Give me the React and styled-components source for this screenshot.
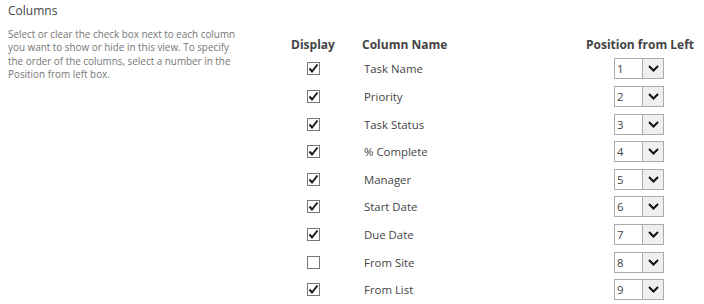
import React from 'react'
import styled, { createGlobalStyle } from 'styled-components';

const Global = createGlobalStyle`
body{
  margin:0;
  background:#fff;
  font-family:"Open Sans","Noto Sans",sans-serif;
}
`;

const Page = styled.section`
display:flex;
width:704px;
height:304px;
padding:0 0 0 8px;
box-sizing:border-box;
`;

const Intro = styled.div`
width:272px;
flex-shrink:0;
`;

const Heading = styled.h2`
margin:0;
padding-top:3px;
font-size:12px;
font-weight:400;
color:#444;
line-height:16px;
`;

const Help = styled.p`
margin:9px 0 0 0;
font-size:9.9px;
line-height:13.4px;
color:#777;
white-space:nowrap;
`;

const Table = styled.div`
display:grid;
grid-template-columns:66px 234px 120px;
grid-template-rows:22px;
grid-auto-rows:27.625px;
padding-top:33px;
`;

const Head = styled.div`
font-weight:700;
font-size:12px;
color:#444;
display:flex;
align-items:center;
justify-content:${p => p.$align || 'flex-start'};
padding-left:${p => p.$pad || 0}px;
`;

const Cell = styled.div`
display:flex;
align-items:center;
justify-content:${p => p.$align || 'flex-start'};
padding-left:${p => p.$pad || 0}px;
font-size:11.4px;
color:#444;
`;

const Box = styled.span`
width:11px;
height:11px;
border:1px solid #777;
background:#fff;
display:flex;
align-items:center;
justify-content:center;
`;

const Select = styled.div`
width:48px;
height:19px;
border:1px solid #ababab;
display:flex;
background:#fff;
margin-left:-2px;
`;

const Value = styled.span`
flex:1;
font-size:11.4px;
color:#444;
padding-left:2px;
line-height:19px;
`;

const Drop = styled.span`
width:20px;
border-left:1px solid #ababab;
background:#efefef;
display:flex;
align-items:center;
justify-content:center;
`;

const columns = [
  ['Task Name', true],
  ['Priority', true],
  ['Task Status', true],
  ['% Complete', true],
  ['Manager', true],
  ['Start Date', true],
  ['Due Date', true],
  ['From Site', false],
  ['From List', true],
];

function Check({ on }) {
  return (
    <Box>
      {on && (
        <svg width="11" height="11" viewBox="0 0 11 11">
          <path d="M1.5 5.5 L4 8.5 L9.5 1.5" fill="none" stroke="#1a1a1a" strokeWidth="2" />
        </svg>
      )}
    </Box>
  );
}

function App() {
  return (
    <Page>
      <Global />
      <Intro>
        <Heading>Columns</Heading>
        <Help>
          Select or clear the check box next to each column<br />
          you want to show or hide in this view. To specify<br />
          the order of the columns, select a number in the<br />
          Position from left box.
        </Help>
      </Intro>
      <Table>
        <Head $align="center">Display</Head>
        <Head $pad={16}>Column Name</Head>
        <Head $align="center">Position from Left</Head>
        {columns.map(([name, on], i) => (
          <React.Fragment key={name}>
            <Cell $align="center"><Check on={on} /></Cell>
            <Cell $pad={18}>{name}</Cell>
            <Cell $align="center">
              <Select>
                <Value>{i + 1}</Value>
                <Drop>
                  <svg width="11" height="7" viewBox="0 0 11 7">
                    <path d="M1 1 L5.5 5.5 L10 1" fill="none" stroke="#111" strokeWidth="2" />
                  </svg>
                </Drop>
              </Select>
            </Cell>
          </React.Fragment>
        ))}
      </Table>
    </Page>
  );
}

export default App
